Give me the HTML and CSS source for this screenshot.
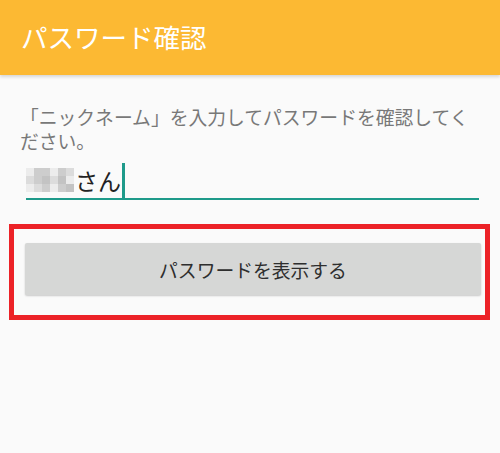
FILE: index.html
```html
<!DOCTYPE html>
<html lang="ja">
<head>
<meta charset="utf-8">
<title>パスワード確認</title>
<link rel="stylesheet" href="styles.css">
</head>
<body>
<header class="appbar">
  <h1 class="appbar-title">パスワード確認</h1>
</header>
<main class="content">
  <p class="hint">「ニックネーム」を入力してパスワードを確認してください。</p>
  <div class="field">
    <span class="mosaic" aria-hidden="true">
      <i class="c1"></i><i class="c3"></i><i class="c3"></i><i class="c1"></i><i class="c3"></i><i class="c2"></i>
      <i class="c2"></i><i class="c3"></i><i class="c4"></i><i class="c2"></i><i class="c4"></i><i class="c1"></i>
      <i class="c1"></i><i class="c2"></i><i class="c3"></i><i class="c1"></i><i class="c3"></i><i class="c4"></i>
    </span>
    <span class="value">さん</span>
    <span class="caret"></span>
  </div>
  <div class="highlight">
    <button class="btn" type="button">パスワードを表示する</button>
  </div>
</main>
</body>
</html>
```

FILE: styles.css
```css
* { box-sizing: border-box; }

html, body {
  margin: 0;
  padding: 0;
}

body {
  width: 500px;
  height: 453px;
  background: #fafafa;
  font-family: "Noto Sans CJK JP", "Noto Sans", sans-serif;
  overflow: hidden;
}

.appbar {
  height: 75px;
  background: #fcb933;
  display: flex;
  align-items: center;
  padding-left: 21px;
  box-shadow: 0 2px 3px rgba(0, 0, 0, 0.14);
  position: relative;
}

.appbar-title {
  margin: 0;
  color: #ffffff;
  font-size: 26.5px;
  font-weight: 400;
  line-height: 1;
}

.content {
  padding: 0 10px 0 9px;
}

.hint {
  margin: 30px 10px 0 11px;
  color: #787878;
  font-size: 18.8px;
  line-height: 24px;
}

.field {
  margin: 9px 11px 0 17px;
  height: 38px;
  display: flex;
  align-items: center;
  border-bottom: 2px solid #1e9a8a;
}

.mosaic {
  display: grid;
  grid-template-columns: repeat(6, 8px);
  grid-template-rows: repeat(3, 8px);
  width: 48px;
  margin-right: 1px;
}

.mosaic i { display: block; }
.mosaic .c1 { background: #ececec; }
.mosaic .c2 { background: #dcdcdc; }
.mosaic .c3 { background: #cdcdcd; }
.mosaic .c4 { background: #c3c3c3; }

.value {
  color: #222222;
  font-size: 23px;
  line-height: 1;
}

.caret {
  width: 3px;
  height: 35px;
  margin-left: 1px;
  background: #1e9a8a;
}

.highlight {
  margin-top: 24px;
  border: 5px solid #ec2227;
  padding: 14px 4px 20px 11px;
}

.btn {
  display: block;
  width: 100%;
  height: 52px;
  border: 0;
  border-radius: 2px;
  background: #d6d7d6;
  box-shadow: 0 1px 2px rgba(0, 0, 0, 0.2);
  color: #2e2e2e;
  font-family: "Noto Sans CJK JP", "Noto Sans", sans-serif;
  font-size: 18.8px;
  padding: 0;
}
```
